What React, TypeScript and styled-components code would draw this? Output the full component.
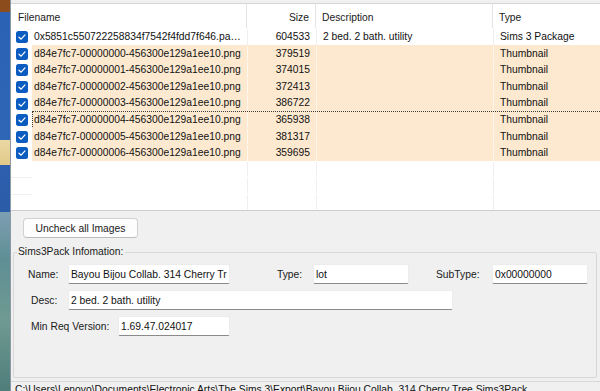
import styled, { createGlobalStyle } from 'styled-components';

type FileRow = {
  name: string;
  size: string;
  description: string;
  type: string;
};

const files: FileRow[] = [
  { name: '0x5851c550722258834f7542f4fdd7f646.package', size: '604533', description: '2 bed. 2 bath. utility', type: 'Sims 3 Package' },
  { name: 'd84e7fc7-00000000-456300e129a1ee10.png', size: '379519', description: '', type: 'Thumbnail' },
  { name: 'd84e7fc7-00000001-456300e129a1ee10.png', size: '374015', description: '', type: 'Thumbnail' },
  { name: 'd84e7fc7-00000002-456300e129a1ee10.png', size: '372413', description: '', type: 'Thumbnail' },
  { name: 'd84e7fc7-00000003-456300e129a1ee10.png', size: '386722', description: '', type: 'Thumbnail' },
  { name: 'd84e7fc7-00000004-456300e129a1ee10.png', size: '365938', description: '', type: 'Thumbnail' },
  { name: 'd84e7fc7-00000005-456300e129a1ee10.png', size: '381317', description: '', type: 'Thumbnail' },
  { name: 'd84e7fc7-00000006-456300e129a1ee10.png', size: '359695', description: '', type: 'Thumbnail' },
];

const FOCUSED = 5;
const ITEM_COLUMNS = '215px 69px 177px 1fr';

const GlobalStyle = createGlobalStyle`
  html, body {
    margin: 0;
    padding: 0;
  }
  body {
    width: 600px;
    height: 391px;
    overflow: hidden;
    font-family: "Liberation Sans", Arial, sans-serif;
    font-size: 10.3px;
    color: #111;
  }
  * {
    box-sizing: border-box;
  }
`;

function CheckIcon() {
  return (
    <svg width="12" height="12" viewBox="0 0 12 12">
      <rect x="0" y="0" width="12" height="12" rx="2.5" fill="#0b5cc0" />
      <path d="M3 6.2 L5.1 8.2 L9 3.9" stroke="#fff" strokeWidth="1.2" fill="none" strokeLinecap="round" strokeLinejoin="round" />
    </svg>
  );
}

export default function App() {
  const emptyRows = [0, 1, 2];

  return (
    <Screen>
      <GlobalStyle />
      <Desktop />
      <Window>
        <ListView>
          <Header>
            <HeaderCell $pad={7}>Filename</HeaderCell>
            <HeaderCell $align="right">Size</HeaderCell>
            <HeaderCell>Description</HeaderCell>
            <HeaderCell $last>Type</HeaderCell>
          </Header>
          {files.map((file, i) => (
            <Row key={file.name}>
              <CheckCell>
                <CheckIcon />
              </CheckCell>
              <Item $highlight={i > 0} $focused={i === FOCUSED}>
                <Cell $highlight={i > 0} $pad={1}>{file.name}</Cell>
                <Cell $highlight={i > 0} $align="right">{file.size}</Cell>
                <Cell $highlight={i > 0}>{file.description}</Cell>
                <Cell $highlight={i > 0} $last>{file.type}</Cell>
              </Item>
            </Row>
          ))}
          {emptyRows.map((n) => (
            <EmptyRow key={n}>
              <CheckCell />
              <Item>
                <Cell />
                <Cell />
                <Cell />
                <Cell $last />
              </Item>
            </EmptyRow>
          ))}
        </ListView>

        <Panel>
          <Button type="button">Uncheck all Images</Button>
          <GroupBox>
            <Legend>Sims3Pack Infomation:</Legend>
            <FieldRow $indent={14}>
              <Label $width={40}>Name:</Label>
              <TextBox $width={162} readOnly value="Bayou Bijou Collab. 314 Cherry Tree" />
              <Label $width={36} $gap={47}>Type:</Label>
              <TextBox $width={96} readOnly value="lot" />
              <Label $width={56} $gap={27}>SubType:</Label>
              <TextBox $width={96} readOnly value="0x00000000" />
            </FieldRow>
            <FieldRow $indent={17}>
              <Label $width={37}>Desc:</Label>
              <TextBox $width={385} readOnly value="2 bed. 2 bath. utility" />
            </FieldRow>
            <FieldRow $indent={17}>
              <Label $width={87}>Min Req Version:</Label>
              <TextBox $width={112} readOnly value="1.69.47.024017" />
            </FieldRow>
          </GroupBox>
        </Panel>

        <StatusBar>
          C:\Users\Lenovo\Documents\Electronic Arts\The Sims 3\Export\Bayou Bijou Collab. 314 Cherry Tree.Sims3Pack
        </StatusBar>
      </Window>
    </Screen>
  );
}

const Screen = styled.div`
  display: flex;
  width: 600px;
  height: 391px;
  overflow: hidden;
`;

const Desktop = styled.div`
  width: 10px;
  flex-shrink: 0;
  background: linear-gradient(
    to bottom,
    #8c4c1c 0px,
    #8c4c1c 12px,
    #2c62b3 12px,
    #2f66b6 140px,
    #ead8a2 140px,
    #e2c98a 165px,
    #2c5fae 165px,
    #2a5ca8 212px,
    #7d9fb2 212px,
    #5f8e94 260px,
    #6f9a92 320px,
    #4f7d7a 391px
  );
`;

const Window = styled.div`
  flex: 1;
  display: flex;
  flex-direction: column;
  padding-top: 3px;
  background: #f0f0f0;
  border-left: 1px solid #8d98a6;
  min-width: 0;
`;

const ListView = styled.div`
  height: 208px;
  flex-shrink: 0;
  background: #fff;
  border-top: 1px solid #d6d6d6;
  border-bottom: 1px solid #cfcfcf;
  overflow: hidden;
`;

const Header = styled.div`
  display: grid;
  grid-template-columns: 236px 69px 177px 1fr;
  height: 25px;
  border-bottom: 1px solid #fff;
`;

const HeaderCell = styled.div<{ $align?: 'left' | 'right'; $pad?: number; $last?: boolean }>`
  display: flex;
  align-items: center;
  justify-content: ${(p) => (p.$align === 'right' ? 'flex-end' : 'flex-start')};
  padding: 2px 6px 0 ${(p) => p.$pad ?? 6}px;
  border-right: ${(p) => (p.$last ? 'none' : '1px solid #e5e5e5')};
  color: #1a1a1a;
  white-space: nowrap;
`;

const Row = styled.div`
  display: flex;
  height: 16.6px;
`;

const EmptyRow = styled(Row)`
  border-bottom: 1px solid #f0f0f0;
`;

const CheckCell = styled.div`
  width: 21px;
  flex-shrink: 0;
  display: flex;
  align-items: center;
  padding-left: 5px;
  background: #fff;
`;

const Item = styled.div<{ $highlight?: boolean; $focused?: boolean }>`
  flex: 1;
  display: grid;
  grid-template-columns: ${ITEM_COLUMNS};
  background: ${(p) => (p.$highlight ? '#fde9d0' : '#fff')};
  border-top: 1px ${(p) => (p.$focused ? 'dotted #3c3c3c' : 'solid transparent')};
  border-left: 1px ${(p) => (p.$focused ? 'dotted #3c3c3c' : 'solid transparent')};
  margin-top: -1px;
  min-width: 0;
`;

const Cell = styled.div<{ $highlight?: boolean; $align?: 'left' | 'right'; $pad?: number; $last?: boolean }>`
  display: block;
  text-align: ${(p) => p.$align ?? 'left'};
  padding: 0 6px 0 ${(p) => p.$pad ?? 6}px;
  border-right: ${(p) => (p.$last ? 'none' : `1px solid ${p.$highlight ? '#fff6ec' : '#efefef'}`)};
  border-bottom: 1px solid ${(p) => (p.$highlight ? '#fff3e4' : '#fff')};
  white-space: nowrap;
  overflow: hidden;
  text-overflow: ellipsis;
  min-width: 0;
  line-height: 16px;
`;

const Panel = styled.div`
  flex: 1;
  display: flex;
  flex-direction: column;
  align-items: flex-start;
  padding: 7px 3px 3px 2px;
  gap: 7px;
  min-height: 0;
`;

const Button = styled.button`
  width: 115px;
  height: 20px;
  margin-left: 10px;
  padding: 0;
  font: inherit;
  color: #1a1a1a;
  background: #fdfdfd;
  border: 1px solid #d0d0d0;
  border-bottom-color: #bdbdbd;
  border-radius: 4px;
`;

const GroupBox = styled.fieldset`
  align-self: stretch;
  flex: 1;
  margin: 0;
  padding: 0;
  border: 1px solid #d7d7d7;
  border-radius: 2px;
  display: flex;
  flex-direction: column;
  gap: 6px;
`;

const Legend = styled.legend`
  margin-left: 3px;
  padding: 0 2px 0 1px;
  height: 14px;
  line-height: 14px;
  color: #1a1a1a;
  margin-bottom: 5px;
`;

const FieldRow = styled.div<{ $indent: number }>`
  display: flex;
  align-items: center;
  padding-left: ${(p) => p.$indent}px;
  height: 20px;
`;

const Label = styled.span<{ $width: number; $gap?: number }>`
  width: ${(p) => p.$width}px;
  margin-left: ${(p) => p.$gap ?? 0}px;
  flex-shrink: 0;
  color: #1a1a1a;
  white-space: nowrap;
`;

const TextBox = styled.input<{ $width: number }>`
  width: ${(p) => p.$width}px;
  height: 20px;
  flex-shrink: 0;
  padding: 0 2px;
  font: inherit;
  color: #111;
  background: #fff;
  border: 1px solid #ececec;
  border-bottom: 1px solid #8a8a8a;
  border-radius: 2px;
  outline: none;
`;

const StatusBar = styled.div`
  height: 10px;
  flex-shrink: 0;
  padding: 2px 0 0 4px;
  border-top: 1px solid #d9d9d9;
  white-space: nowrap;
  overflow: hidden;
  line-height: 12px;
  color: #111;
`;
